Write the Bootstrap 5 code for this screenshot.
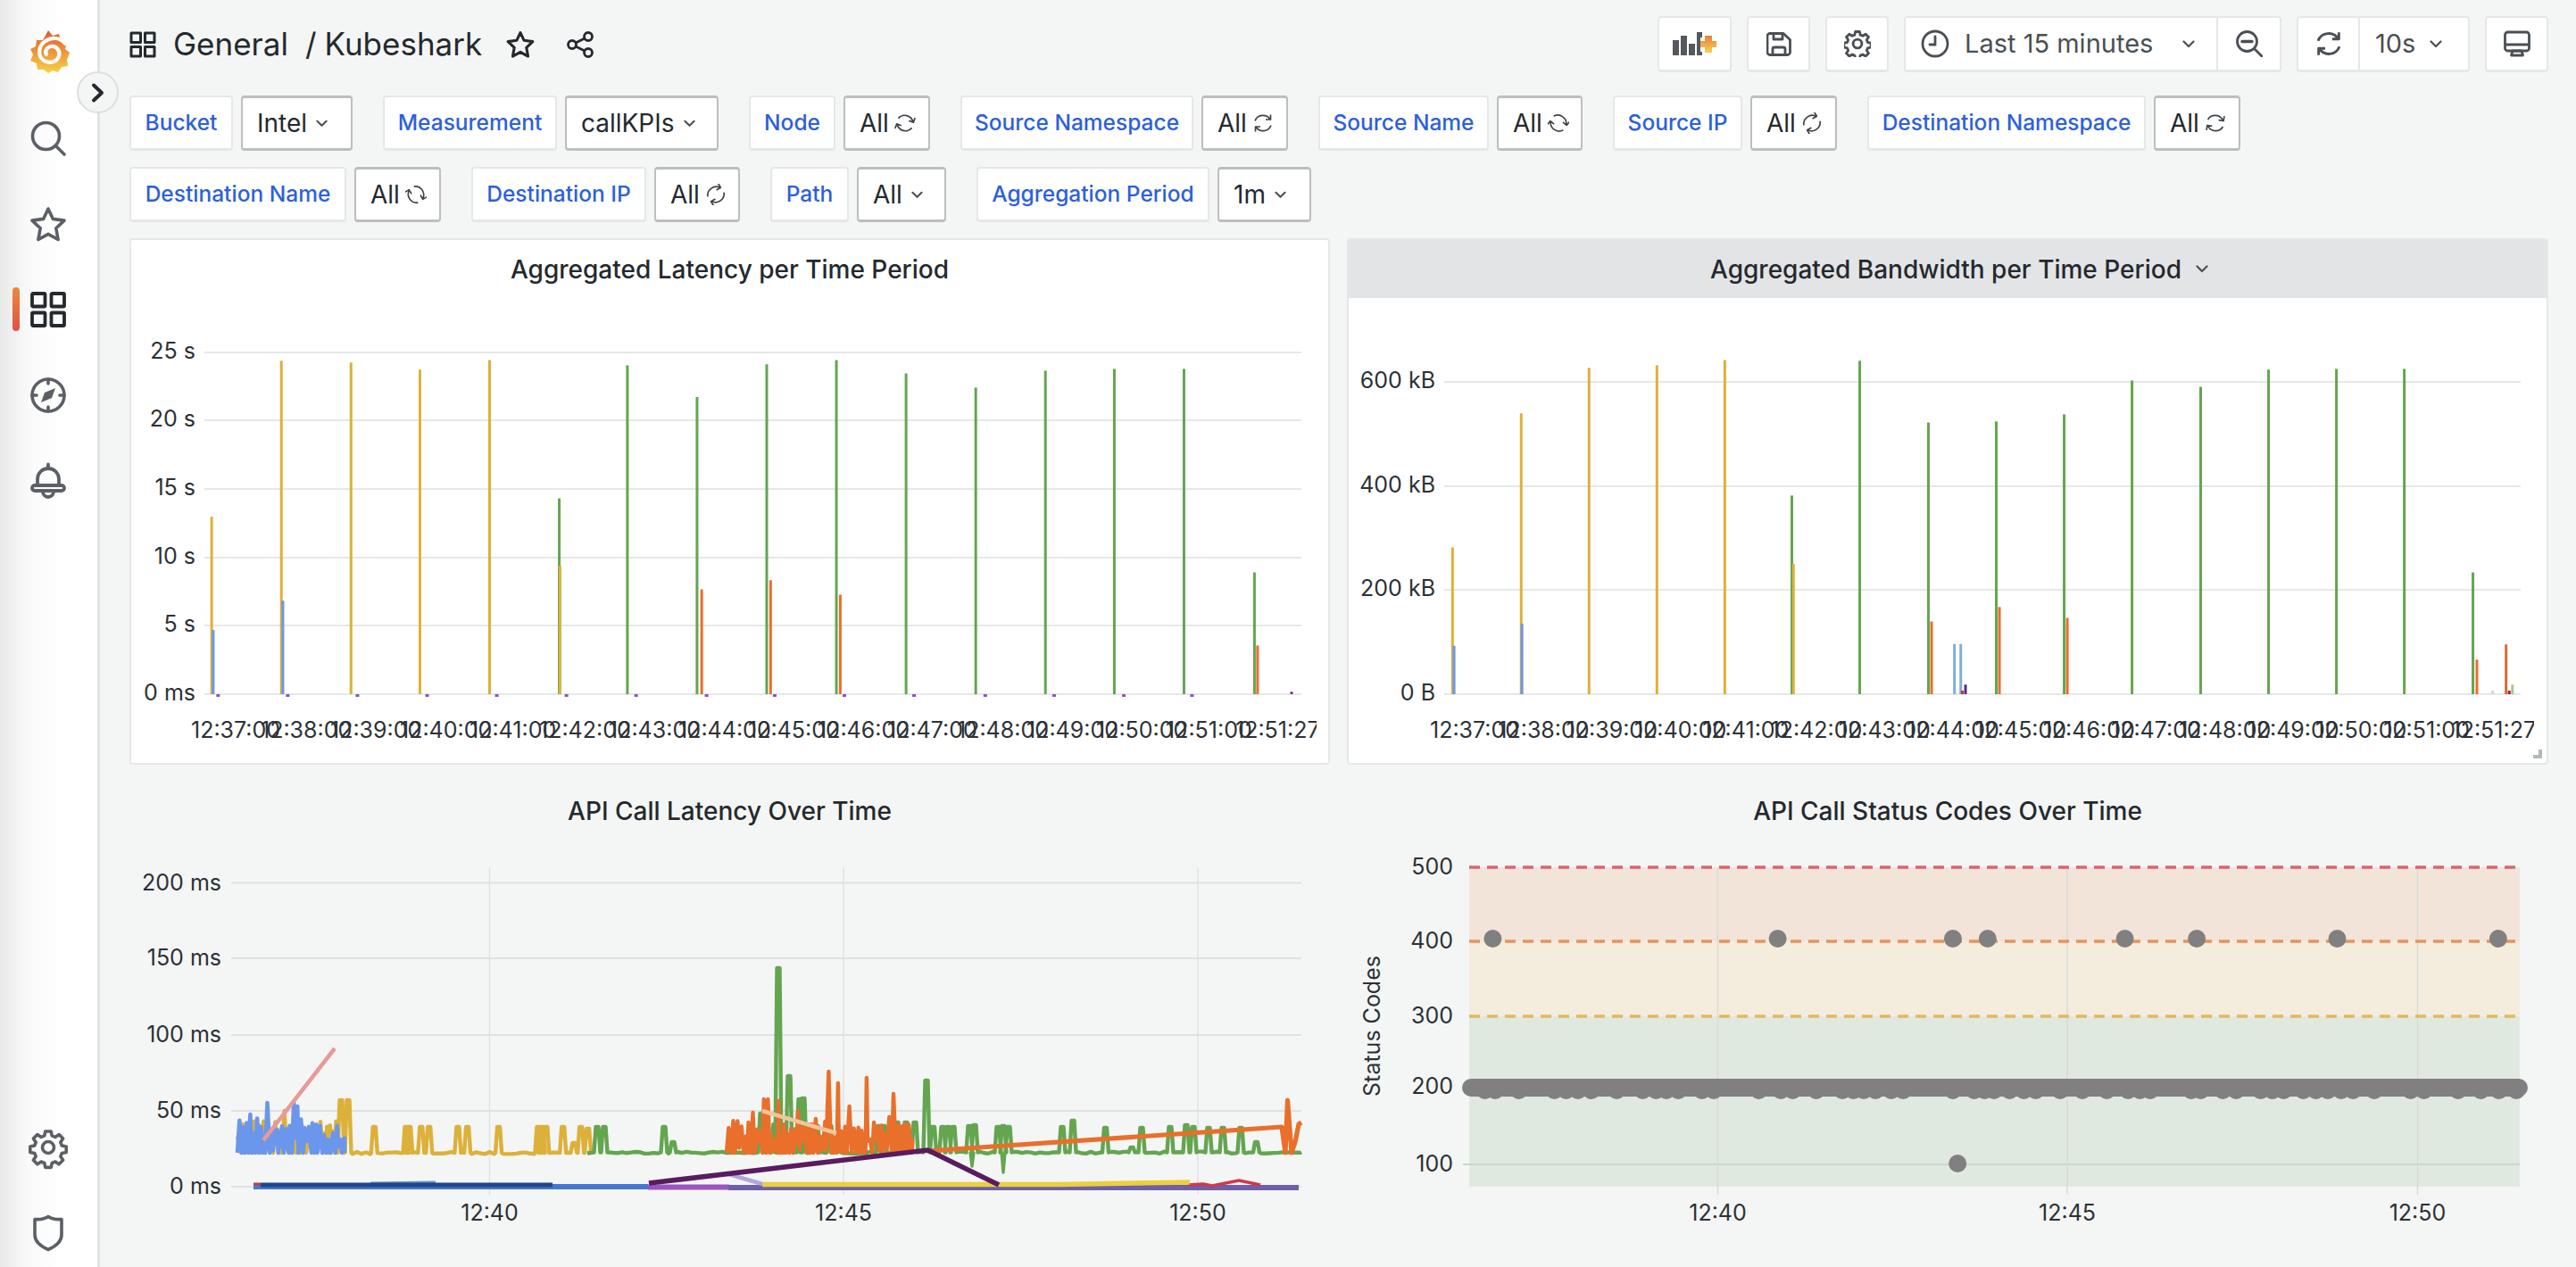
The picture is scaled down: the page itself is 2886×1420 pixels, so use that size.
<!DOCTYPE html>
<html lang="en">
<head>
<meta charset="UTF-8">
<title>General / Kubeshark</title>
<link rel="stylesheet" href="https://cdn.jsdelivr.net/npm/bootstrap@5.3.0/dist/css/bootstrap.min.css">
<style>
    html, body { height: 100%; }
    body {
        background-color: #f4f6f5;
        color: #24292e;
        font-family: Inter, "Noto Sans", sans-serif;
        overflow: hidden;
    }
    .gf-side {
        width: 112px;
        height: 1420px;
        flex: none;
        position: relative;
        background: linear-gradient(90deg, #e9e9e9 0, #fafafa 32px, #fff 70px);
        border-right: 3px solid #e2e3e4;
    }
    .gf-side-top { padding-top: 34px; }
    .gf-side-item { width: 40px; margin-left: 34px; position: relative; display: block; }
    .gf-side svg { display: block; overflow: visible; }
    .gf-active-bar {
        position: absolute; left: -20px; top: -5px; width: 8px; height: 49px; border-radius: 4px;
        background: linear-gradient(180deg, #ec8a3c, #e0504a);
    }
    .gf-toggle {
        position: absolute; left: 86px; top: 80px; width: 47px; height: 47px; z-index: 5;
        border-radius: 50%; border: 2px solid #dcdee0; background: #f4f6f5;
        display: flex; align-items: center; justify-content: center; padding: 0;
    }
    .gf-main { padding: 18px 31px 0 33px; width: 2774px; }
    .gf-head { height: 63px; margin-bottom: 26px; }
    .gf-title { font-size: 35px; line-height: 1; color: #24292e; }
    .gf-tool {
        height: 63px; background: #fff; border: 2px solid #e6e7e8; border-bottom-width: 3px; border-radius: 4px;
        color: #4a4f55; font-size: 29px; display: flex; align-items: center; justify-content: center; padding: 0;
    }
    .gf-vars { column-gap: 34px; margin-bottom: 18px; height: 62px; }
    .gf-var { gap: 9px; }
    .gf-label {
        height: 62px; background: #fff; color: #2d5fdc; font-size: 24.5px; font-weight: 500;
        border: 2px solid #e6e7e8; border-bottom-width: 3px; border-radius: 4px; display: flex; align-items: center; justify-content: center; white-space: nowrap;
    }
    .gf-value {
        height: 62px; padding: 0 15px 0 16px; background: #fff; color: #24292e; font-size: 28px;
        border: 2px solid #bdbebf; border-width: 3px 2px; border-radius: 4px; display: flex; align-items: center; gap: 6px; white-space: nowrap;
    }
    .gf-grid { display: grid; grid-template-columns: 1345px 1346px; column-gap: 19px; row-gap: 19px; }
    .gf-panel { height: 590px; background: #fff; border: 2px solid #e6e7e8; border-radius: 4px; overflow: hidden; position: relative; }
    .gf-panel-flat { height: 545px; background: transparent; border: 0; overflow: hidden; }
    .gf-panel-title {
        height: 65px; font-size: 28px; font-weight: 500; display: flex; align-items: center; justify-content: center; gap: 11px;
    }
    .gf-panel-hover { background: #e3e4e6; padding-left: 26px; gap: 16px; }
    .gf-resize {
        position: absolute; right: 5px; bottom: 5px; width: 10px; height: 10px;
        border-right: 4px solid #b5b7b9; border-bottom: 4px solid #b5b7b9;
    }
    .gf-chart { display: block; }
    .gf-chart text { font-family: Inter, sans-serif; font-size: 25px; fill: #2c3136; }
</style>
</head>
<body>
<svg width="0" height="0" class="position-absolute">
    <defs>
        <linearGradient id="logoGrad" x1="0" y1="0" x2="0" y2="1">
            <stop offset="0" stop-color="#e35a2d"/><stop offset="1" stop-color="#f7d146"/>
        </linearGradient>
        <linearGradient id="plusGrad" x1="0" y1="0" x2="0" y2="1">
            <stop offset="0" stop-color="#e8803a"/><stop offset="1" stop-color="#f6cf58"/>
        </linearGradient>
        <symbol id="ic-sync" viewBox="0 0 24 24">
            <path d="M3 9.5A9.5 9.5 0 0 1 20 8M21 14.5A9.5 9.5 0 0 1 4 16M20.5 2.5V8H15M3.5 21.5V16H9" fill="none" stroke="#3f4449" stroke-width="1.7" stroke-linejoin="round"/>
        </symbol>
        <symbol id="ic-sync-tool" viewBox="0 0 24 24">
            <path d="M3 9.5A9.5 9.5 0 0 1 20 8M21 14.5A9.5 9.5 0 0 1 4 16M20.5 2.5V8H15M3.5 21.5V16H9" fill="none" stroke="#4a4f55" stroke-width="2.2" stroke-linejoin="round"/>
        </symbol>
        <symbol id="ic-chev" viewBox="0 0 14 9">
            <path d="M1.5 1.500L7 7l5.500-5.500" fill="none" stroke="#4a4f55" stroke-width="2.2" stroke-linecap="round" stroke-linejoin="round"/>
        </symbol>
    </defs>
</svg>

<div class="d-flex">
    <aside class="gf-side d-flex flex-column justify-content-between">
        <div class="gf-side-top">
            <span class="gf-side-item">
                <svg width="46" height="48" viewBox="0 0 46 48" style="margin-left:-2px">
                    <path fill="url(#logoGrad)" d="M22 0l5 6 7-2 2 7 7 3-2 7 5 4-3 8 1 7-7 1-4 6-6-2-5 3-5-4-7 0-1-7-7-3 3-7-3-6 6-3 1-7 7 0z"/>
                    <path d="M41 15C36 8 26 7 19 12 11 17 10 28 16 33c6 5 16 3 18-4 2-6-3-12-9-11-5 1-7 6-5 9" fill="none" stroke="#fff" stroke-width="4.2" stroke-linecap="round"/>
                </svg>
            </span>
            <span class="gf-side-item" style="margin-top:53px">
                <svg width="40" height="40" viewBox="0 0 40 40" fill="none" stroke="#5c6066" stroke-width="3.6" stroke-linecap="round">
                    <circle cx="17.5" cy="17.5" r="15"/><path d="M29 29l9 9"/>
                </svg>
            </span>
            <span class="gf-side-item" style="margin-top:57px">
                <svg width="40" height="39" viewBox="0 0 40 39" fill="none" stroke="#5c6066" stroke-width="3.6" stroke-linejoin="round">
                    <path d="M20 2l5.4 11.4 12.6 1.7-9.2 8.7 2.3 12.7L20 30.4 8.900 36.500l2.300-12.700L2 15.100l12.600-1.700z"/>
                </svg>
            </span>
            <span class="gf-side-item" style="margin-top:56px">
                <i class="gf-active-bar"></i>
                <svg width="40" height="40" viewBox="0 0 40 40" fill="none" stroke="#24292e" stroke-width="3.8" stroke-linejoin="round">
                    <rect x="2" y="2" width="14.5" height="14.5" rx="1"/><rect x="23.5" y="2" width="14.5" height="14.5" rx="1"/>
                    <rect x="2" y="23.5" width="14.5" height="14.5" rx="1"/><rect x="23.5" y="23.5" width="14.5" height="14.5" rx="1"/>
                </svg>
            </span>
            <span class="gf-side-item" style="margin-top:56px">
                <svg width="40" height="40" viewBox="0 0 40 40" fill="none" stroke="#5c6066" stroke-width="3.6" stroke-linecap="round">
                    <circle cx="20" cy="20" r="18"/><path d="M20 2v5M20 33v5M2 20h5M33 20h5"/>
                    <path d="M28 12l-4 11-12 5 4-11z" fill="#5c6066" stroke="none"/>
                </svg>
            </span>
            <span class="gf-side-item" style="margin-top:56px">
                <svg width="40" height="40" viewBox="0 0 40 40" fill="none" stroke="#5c6066" stroke-width="3.8" stroke-linejoin="round" stroke-linecap="round">
                    <path d="M20 1.5v4M8 24V18a12 12 0 0 1 24 0v6M5 25h30a2 2 0 0 1 0 6H5a2 2 0 0 1 0-6zM14 32a6 6 0 0 0 12 0"/>
                </svg>
            </span>
        </div>
        <div class="pb-3">
            <span class="gf-side-item">
                <svg width="40" height="40" viewBox="0 0 40 40" fill="none" stroke="#5c6066" stroke-width="3.6" stroke-linejoin="round">
                    <circle cx="20" cy="20" r="6.5"/>
                    <path d="M16.8 2h6.4l1 4.900 3.700 1.500 4.200-2.800 4.500 4.500-2.800 4.200 1.500 3.700 4.900 1v6.400l-4.900 1-1.500 3.700 2.800 4.200-4.500 4.500-4.200-2.800-3.700 1.500-1 4.900h-6.400l-1-4.900-3.700-1.500-4.200 2.800-4.500-4.500 2.800-4.200-1.500-3.700-4.900-1v-6.400l4.900-1 1.500-3.700-2.800-4.200 4.500-4.500 4.200 2.800 3.700-1.500z"/>
                </svg>
            </span>
            <span class="gf-side-item" style="margin-top:56px;margin-bottom:2px">
                <svg width="40" height="40" viewBox="0 0 40 40" fill="none" stroke="#5c6066" stroke-width="3.6" stroke-linejoin="round">
                    <path d="M5 4.5c6 .5 11-.3 15-3 4 2.700 9 3.500 15 3V22c0 7.500-7 13-15 16.500C12 35 5 29.500 5 22z"/>
                </svg>
            </span>
        </div>
        <button class="gf-toggle" type="button" aria-label="Expand">
            <svg width="16" height="22" viewBox="0 0 16 22"><path d="M3 2.5l9 8.500-9 8.500" fill="none" stroke="#24292e" stroke-width="4" stroke-linecap="round" stroke-linejoin="round"/></svg>
        </button>
    </aside>

    <main class="gf-main">
        <header class="gf-head d-flex align-items-center justify-content-between">
            <div class="d-flex align-items-center">
                <svg width="30" height="30" viewBox="0 0 30 30" fill="none" stroke="#24292e" stroke-width="3" stroke-linejoin="round" class="me-3">
                    <rect x="2" y="2" width="10.5" height="10.5"/><rect x="17.5" y="2" width="10.5" height="10.5"/>
                    <rect x="2" y="17.5" width="10.5" height="10.5"/><rect x="17.5" y="17.5" width="10.5" height="10.5"/>
                </svg>
                <span class="gf-title" style="margin-left:3px">General</span>
                <span class="gf-title" style="margin-left:19px">/</span>
                <span class="gf-title" style="margin-left:9px">Kubeshark</span>
                <svg width="32" height="30" viewBox="0 0 40 39" fill="none" stroke="#24292e" stroke-width="4" stroke-linejoin="round" style="margin-left:27px">
                    <path d="M20 2l5.4 11.4 12.6 1.700-9.200 8.700 2.300 12.700L20 30.400 8.900 36.500l2.300-12.700L2 15.100l12.600-1.700z"/>
                </svg>
                <svg width="30" height="30" viewBox="0 0 30 30" fill="none" stroke="#24292e" stroke-width="2.8" style="margin-left:36px">
                    <circle cx="6" cy="15" r="4.5"/><circle cx="24" cy="6" r="4.5"/><circle cx="24" cy="24" r="4.5"/>
                    <path d="M10 13l10-5M10 17l10 5"/>
                </svg>
            </div>
            <div class="d-flex align-items-center" style="gap:17px">
                <button class="gf-tool" type="button" style="width:83px" aria-label="Add panel">
                    <svg width="49" height="26" viewBox="0 0 49 26">
                        <g fill="#55595e"><rect x="0" y="9" width="7" height="17"/><rect x="9" y="4" width="7" height="22"/><rect x="18" y="13" width="7" height="13"/><path d="M27 0h6v6h-2v16h2v4h-6z"/></g>
                        <path d="M36 4h8v6h5v7h-5v6h-8v-6h-5v-7h5z" fill="url(#plusGrad)"/>
                    </svg>
                </button>
                <button class="gf-tool" type="button" style="width:71px" aria-label="Save">
                    <svg width="28" height="27" viewBox="0 0 28 27" fill="none" stroke="#4a4f55" stroke-width="2.8" stroke-linejoin="round">
                        <path d="M4 1.5h15l7.500 7v14a3 3 0 0 1-3 3H4a3 3 0 0 1-3-3v-18a3 3 0 0 1 3-3z"/><path d="M8 2v6h10V2M7 25v-6a2 2 0 0 1 2-2h10a2 2 0 0 1 2 2v6"/>
                    </svg>
                </button>
                <button class="gf-tool" type="button" style="width:71px" aria-label="Settings">
                    <svg width="30" height="30" viewBox="0 0 40 40" fill="none" stroke="#4a4f55" stroke-width="3.8" stroke-linejoin="round">
                        <circle cx="20" cy="20" r="6.5"/>
                        <path d="M16.8 2h6.4l1 4.900 3.700 1.500 4.200-2.800 4.500 4.500-2.800 4.200 1.500 3.700 4.900 1v6.400l-4.900 1-1.500 3.700 2.800 4.200-4.500 4.500-4.200-2.800-3.700 1.500-1 4.900h-6.400l-1-4.900-3.700-1.500-4.200 2.800-4.500-4.500 2.800-4.200-1.500-3.700-4.900-1v-6.400l4.900-1 1.500-3.700-2.800-4.200 4.500-4.500 4.200 2.800 3.700-1.500z"/>
                    </svg>
                </button>
                <div class="d-flex">
                    <button class="gf-tool justify-content-start rounded-end-0" type="button" style="width:352px;padding-left:17px">
                        <svg width="32" height="32" viewBox="0 0 32 32" fill="none" stroke="#4a4f55" stroke-width="2.8" stroke-linecap="round">
                            <circle cx="16" cy="16" r="14"/><path d="M16 8v9h-6"/>
                        </svg>
                        <span style="margin-left:17px">Last 15 minutes</span>
                        <svg width="14" height="9" class="ms-auto" style="margin-right:24px"><use href="#ic-chev"/></svg>
                    </button>
                    <button class="gf-tool rounded-start-0 border-start-0" type="button" style="width:71px" aria-label="Zoom out">
                        <svg width="30" height="30" viewBox="0 0 30 30" fill="none" stroke="#4a4f55" stroke-width="2.8" stroke-linecap="round">
                            <circle cx="12.5" cy="12.5" r="11"/><path d="M21 21l8 8"/><path d="M7 12.5h11" stroke-width="3.4"/>
                        </svg>
                    </button>
                </div>
                <div class="d-flex">
                    <button class="gf-tool rounded-end-0" type="button" style="width:71px" aria-label="Refresh">
                        <svg width="32" height="32"><use href="#ic-sync-tool"/></svg>
                    </button>
                    <button class="gf-tool rounded-start-0 border-start-0 justify-content-start" type="button" style="width:123px;padding-left:17px">
                        10s<svg width="14" height="9" class="ms-3"><use href="#ic-chev"/></svg>
                    </button>
                </div>
                <button class="gf-tool" type="button" style="width:71px" aria-label="Cycle view mode">
                    <svg width="30" height="30" viewBox="0 0 30 30" fill="none" stroke="#4a4f55" stroke-width="2.8" stroke-linejoin="round">
                        <rect x="1.5" y="2" width="27" height="21" rx="3"/><path d="M1.5 16h27" stroke-width="3"/><path d="M8.5 28h13l-1.500-5h-10z"/>
                    </svg>
                </button>
            </div>
        </header>

        <div class="gf-vars d-flex" id="varRow1"></div>
        <div class="gf-vars d-flex" id="varRow2"></div>

        <section class="gf-grid">
            <div class="gf-panel">
                <div class="gf-panel-title">Aggregated Latency per Time Period</div>
                <svg class="gf-chart" id="chartLatency" width="1341" height="521" viewBox="147 334 1341 521"></svg>
            </div>
            <div class="gf-panel">
                <div class="gf-panel-title gf-panel-hover">Aggregated Bandwidth per Time Period
                    <svg width="14" height="9"><use href="#ic-chev"/></svg>
                </div>
                <svg class="gf-chart" id="chartBandwidth" width="1342" height="521" viewBox="1511 334 1342 521"></svg>
                <i class="gf-resize"></i>
            </div>
            <div class="gf-panel-flat">
                <div class="gf-panel-title">API Call Latency Over Time</div>
                <svg class="gf-chart" id="chartApi" width="1345" height="480" viewBox="145 941 1345 480"></svg>
            </div>
            <div class="gf-panel-flat">
                <div class="gf-panel-title">API Call Status Codes Over Time</div>
                <svg class="gf-chart" id="chartStatus" width="1346" height="480" viewBox="1509 941 1346 480"></svg>
            </div>
        </section>
    </main>
</div>

<script src="https://cdn.jsdelivr.net/npm/bootstrap@5.3.0/dist/js/bootstrap.bundle.min.js"></script>
<script>
    // Variable rows: label, value, label width, value width, sync icon rotation
    const vars = [
        [["Bucket", "Intel", 116, 125], ["Measurement", "callKPIs", 195, 172], ["Node", "All", 97, 97, 20], ["Source Namespace", "All", 261, 97, 0], ["Source Name", "All", 191, 96, 40], ["Source IP", "All", 145, 97, 150], ["Destination Namespace", "All", 312, 97, 10]],
        [["Destination Name", "All", 243, 97, 60], ["Destination IP", "All", 196, 96, 150], ["Path", "All", 88, 100], ["Aggregation Period", "1m", 261, 105]]
    ];
    vars.forEach((row, i) => {
        document.getElementById("varRow" + (i + 1)).innerHTML = row.map(v => {
            const icon = v[4] === undefined
                ? '<svg width="13" height="9" class="ms-1"><use href="#ic-chev"/></svg>'
                : `<svg width="24" height="24" viewBox="0 0 24 24" class="flex-shrink-0"><use href="#ic-sync" width="24" height="24" transform="rotate(${v[4]} 12 12)"/></svg>`;
            return `<div class="gf-var d-flex"><div class="gf-label" style="width:${v[2]}px">${v[0]}</div>` +
                `<div class="gf-value" style="width:${v[3]}px">${v[1]}${icon}</div></div>`;
        }).join("");
    });

    const YELLOW = "#dcb13a", GREEN = "#64a550", ORANGE = "#e96f2a", BLUE = "#6a96ec";
    const line = (x1, y1, x2, y2, c, w, extra) => `<line x1="${x1}" y1="${y1}" x2="${x2}" y2="${y2}" stroke="${c}" stroke-width="${w}" ${extra || ""}/>`;
    const label = (x, y, t, anchor) => `<text x="${x}" y="${y}" text-anchor="${anchor || "end"}" dominant-baseline="central">${t}</text>`;
    const path = (pts, c, w) => `<polyline points="${pts.map(p => p[0].toFixed(1) + "," + p[1].toFixed(1)).join(" ")}" fill="none" stroke="${c}" stroke-width="${w}" stroke-linejoin="round"/>`;

    let seed = 7;
    const rnd = () => (seed = (seed * 16807) % 2147483647) / 2147483647;

    // Bar charts
    function barChart(id, cfg) {
        let s = "";
        cfg.grid.forEach(g => {
            s += line(cfg.x0, g[0], cfg.x1, g[0], "#e6e8e8", 2);
            s += label(cfg.x0 - 10, g[0] - 2, g[1]);
        });
        cfg.bars.forEach(b => { s += `<rect x="${b[0]}" y="${b[1]}" width="3" height="${778 - b[1]}" fill="${b[2]}"/>`; });
        cfg.ticks.forEach(x => { s += `<rect x="${x}" y="778" width="4" height="3" fill="#8a55c4"/>`; });
        s += `<defs><clipPath id="${id}Clip"><rect x="${cfg.x0 - 20}" y="780" width="${cfg.clip - cfg.x0 + 20}" height="70"/></clipPath></defs><g clip-path="url(#${id}Clip)">`;
        cfg.labels.forEach((t, i) => { s += label(cfg.labelX + i * cfg.labelStep, 818, t, "start"); });
        s += "</g>";
        document.getElementById(id).innerHTML = s;
    }
    const times = ["12:37:00", "12:38:00", "12:39:00", "12:40:00", "12:41:00", "12:42:00", "12:43:00", "12:44:00", "12:45:00", "12:46:00", "12:47:00", "12:48:00", "12:49:00", "12:50:00", "12:51:00", "12:51:27"];

    const lz = z => 140 + z / 1.153, ly = z => 260 + z / 2.529, rz = z => 1500 + z / 1.131;
    const lBars = [[112, 807, YELLOW], [114, 1128, BLUE], [202, 365, YELLOW], [204, 1045, BLUE], [292, 370, YELLOW], [381, 390, YELLOW], [471, 363, YELLOW],
        [561, 755, GREEN], [562, 946, YELLOW], [649, 378, GREEN], [739, 468, GREEN], [745, 1013, ORANGE], [829, 375, GREEN], [834, 987, ORANGE],
        [919, 363, GREEN], [924, 1028, ORANGE], [1009, 401, GREEN], [1099, 441, GREEN], [1189, 393, GREEN], [1278, 388, GREEN], [1368, 388, GREEN], [1459, 965, GREEN], [1463, 1172, ORANGE], [1507, 1303, "#7b2d84"]];
    barChart("chartLatency", {
        x0: 229, x1: 1458, clip: 1475, labelX: 214, labelStep: 78,
        grid: [[395, "25 s"], [471, "20 s"], [548, "15 s"], [625, "10 s"], [701, "5 s"], [778, "0 ms"]],
        bars: lBars.map(b => [lz(b[0]) - 1.5, ly(b[1]), b[2]]),
        ticks: [118, 208, 298, 388, 478, 568, 658, 749, 837, 927, 1017, 1109, 1198, 1288, 1376].map(lz),
        labels: times
    });
    const rBars = [[144, 894, YELLOW], [146, 1173, BLUE], [231, 514, YELLOW], [232, 1110, BLUE], [317, 385, YELLOW], [403, 378, YELLOW], [489, 363, YELLOW],
        [574, 747, GREEN], [576, 941, YELLOW], [660, 365, GREEN], [747, 540, GREEN], [751, 1104, ORANGE], [780, 1168, "#7fb0d6"], [788, 1168, "#7fb0d6"], [794, 1283, "#5a2a86"], [790, 1300, "#c0392b"],
        [833, 537, GREEN], [837, 1063, ORANGE], [919, 517, GREEN], [923, 1094, ORANGE], [1005, 421, GREEN], [1092, 439, GREEN], [1178, 390, GREEN], [1264, 388, GREEN], [1350, 388, GREEN],
        [1437, 965, GREEN], [1442, 1212, ORANGE], [1462, 1300, "#c9dcc0"], [1479, 1169, "#d96a32"], [1483, 1300, "#a01f3c"], [1487, 1283, "#a9c98f"]];
    barChart("chartBandwidth", {
        x0: 1618, x1: 2824, clip: 2839, labelX: 1602, labelStep: 76.3,
        grid: [[428, "600 kB"], [545, "400 kB"], [661, "200 kB"], [778, "0 B"]],
        bars: rBars.map(b => [rz(b[0]) - 1.5, ly(b[1]), b[2]]),
        ticks: [],
        labels: times
    });

    // API call latency
    function spikes(x0, x1, base, list) {
        const pts = [];
        const all = list.slice().sort((a, b) => a[0] - b[0]);
        let x = x0;
        all.forEach(s => {
            while (x < s[0] - 4) { pts.push([x, base + (rnd() - .4) * 2.4]); x += 5; }
            pts.push([s[0] - 3.5, base], [s[0] - 1.5, s[1]], [s[0] + 1.5, s[1]], [s[0] + 3.5, base]);
            x = s[0] + 5;
        });
        while (x < x1) { pts.push([x, base + (rnd() - .4) * 2.4]); x += 5; }
        pts.push([x1, base]);
        return pts;
    }
    function dense(x0, x1, base, lo, hi, peaks) {
        const pts = [];
        let x = x0;
        while (x < x1) {
            pts.push([x, base - (rnd() < .3 ? rnd() * 16 : 0)]);
            x += 1 + rnd() * 2;
            const p = peaks.find(k => Math.abs(k[0] - x) < 2);
            pts.push([x, p ? p[1] : lo + rnd() * (hi - lo)]);
            x += 1 + rnd() * 2;
        }
        pts.push([x1, base]);
        return pts;
    }
    (function () {
        let s = "";
        [[989.5, "200 ms"], [1074, "150 ms"], [1160, "100 ms"], [1245, "50 ms"], [1330, "0 ms"]].forEach(g => {
            s += line(259, g[0], 1458, g[0], "#e0e2e2", 2);
            s += label(248, g[0] - 1, g[1]);
        });
        [[548.5, "12:40"], [945, "12:45"], [1342, "12:50"]].forEach(g => {
            s += line(g[0], 972, g[0], 1339, "#dfe1e1", 1.4);
            s += label(g[0], 1359, g[1], "middle");
        });
        const z9 = z => 220 + z / 2.8;
        // yellow, then green, then orange and blue on top
        const yellowSp = [[382, 1233], [390, 1233]].concat([558, 658, 668, 705, 730, 820, 850, 948, 1072, 1084, 1097, 1150, 1206].map(z => [z9(z), 1263]), [[z9(1184), 1281], [z9(1228), 1265]]);
        s += path(dense(266, 378, 1292, 1275, 1255, [[300, 1250], [320, 1245]]).concat(spikes(381, 658, 1292, yellowSp)), YELLOW, 4.4);
        const greenSp = [[669, 1263], [677, 1263], [744, 1263], [754, 1280], [853, 1248], [872, 1085], [884, 1206], [896, 1232], [900, 1231], [868, 1260],
            [1038, 1211], [1045.5, 1263], [1056, 1263], [1062, 1263], [1068, 1263], [1086, 1262], [1092, 1261], [1118, 1263], [1124, 1262], [1130, 1263],
            [1190, 1263], [1202, 1256], [1238.5, 1264], [1268, 1286], [1279, 1264], [1311, 1263], [1329, 1261], [1337, 1263], [1354, 1264], [1370, 1264], [1390, 1264], [1407.5, 1280],
            [915, 1262], [930, 1262], [985, 1262], [990, 1262], [1005, 1258], [1015, 1258], [1025, 1258]];
        s += path(spikes(658, 1458, 1291.5, greenSp), GREEN, 4.4);
        s += path([[1087, 1291], [1089, 1307], [1091, 1291]], GREEN, 3.4) + path([[1122, 1291], [1124, 1314], [1126, 1291]], GREEN, 3.4);
        s += path(dense(814, 1022, 1292, 1278, 1256, [[844, 1247], [857, 1232], [860, 1232], [872, 1234], [874, 1234], [894, 1245], [912, 1254], [922, 1243], [928, 1201], [938, 1214], [953, 1240], [971, 1208], [998, 1252], [1002, 1226]]), ORANGE, 4.4);
        s += path(dense(266, 386, 1292, 1278, 1252, [[279, 1249], [300, 1236], [328, 1236], [332, 1240], [358, 1262]]), BLUE, 4.6);
        s += line(295, 1278, 375, 1175, "#e89a98", 4.5);
        s += line(854, 1245, 937, 1270, "#f2c49b", 4.5);
        // flat rows along zero
        s += line(284, 1330, 726, 1330, "#4476d3", 6);
        s += line(415, 1326, 488, 1325, "#6f93c4", 3);
        s += line(292, 1328, 619, 1328, "#1f4788", 5);
        s += line(284, 1327, 292, 1327, "#c83a3a", 3);
        s += line(726, 1330.5, 817, 1330.5, "#9954c4", 6);
        s += line(816, 1331, 1455, 1331, "#6e5fa8", 6);
        s += path([[1330, 1328], [1348, 1327], [1358, 1329], [1388, 1323], [1412, 1328]], "#d1394a", 3.5);
        s += path([[854, 1327.5], [1187, 1327.5], [1333, 1325]], "#eccf3f", 5.5);
        s += line(816.5, 1316, 854, 1327, "#b3a6e0", 4.5);
        s += path([[1038, 1290], [1436, 1263], [1440, 1292], [1442.5, 1233], [1447, 1292], [1451, 1280], [1455, 1260], [1458, 1258]], ORANGE, 5.2);
        s += path([[727, 1326], [1039.5, 1289], [1119, 1328]], "#5a1b5f", 5.5);
        document.getElementById("chartApi").innerHTML = s;
    })();

    // API call status codes
    (function () {
        let s = "";
        const rect = (y, h, c) => `<rect x="1646" y="${y}" width="1177" height="${h}" fill="${c}"/>`;
        s += rect(972, 83, "#f3e4d9") + rect(1055, 84, "#f4edde") + rect(1139, 191, "#e0e9df");
        s += line(1639, 1305, 2823, 1305, "#c9d6cb", 2);
        [[1924.5, "12:40"], [2316, "12:45"], [2708.5, "12:50"]].forEach(g => {
            s += line(g[0], 972, g[0], 1339, "#d6dad6", 1.4);
            s += label(g[0], 1359, g[1], "middle");
        });
        [[972, "#d9656e"], [1055, "#e8935a"], [1139, "#e1b95e"]].forEach(g => {
            s += line(1646, g[0], 2823, g[0], g[1], 3.4, 'stroke-dasharray="12 8"');
        });
        [[972, 500], [1055, 400], [1139, 300], [1218, 200], [1305, 100]].forEach(g => { s += label(1628, g[0] - 1, g[1]); });
        s += `<text x="1537" y="1150" text-anchor="middle" dominant-baseline="central" transform="rotate(-90 1537 1150)">Status Codes</text>`;
        const dot = (x, y) => `<circle cx="${x.toFixed(1)}" cy="${y}" r="10" fill="#808080"/>`;
        [185, 198, 228, 273, 288, 303, 320, 352, 385, 402, 415, 430, 460, 475, 532, 560, 575, 605, 638, 652, 665, 680, 700, 715, 778, 805, 818, 830, 850, 868, 883, 914, 942, 973, 1000, 1015, 1028, 1080, 1092, 1120, 1137, 1168, 1183, 1197, 1222, 1238, 1253, 1270, 1285, 1312, 1358, 1375, 1418, 1447, 1470, 1492]
            .forEach(z => { s += dot(rz(z), 1222); });
        s += line(1648, 1219, 2822, 1219, "#808080", 20, 'stroke-linecap="round"');
        [195, 556, 778, 822, 996, 1087, 1265, 1469].forEach(z => { s += dot(rz(z), 1052); });
        s += dot(rz(784), 1304);
        document.getElementById("chartStatus").innerHTML = s;
    })();
</script>
</body>
</html>
